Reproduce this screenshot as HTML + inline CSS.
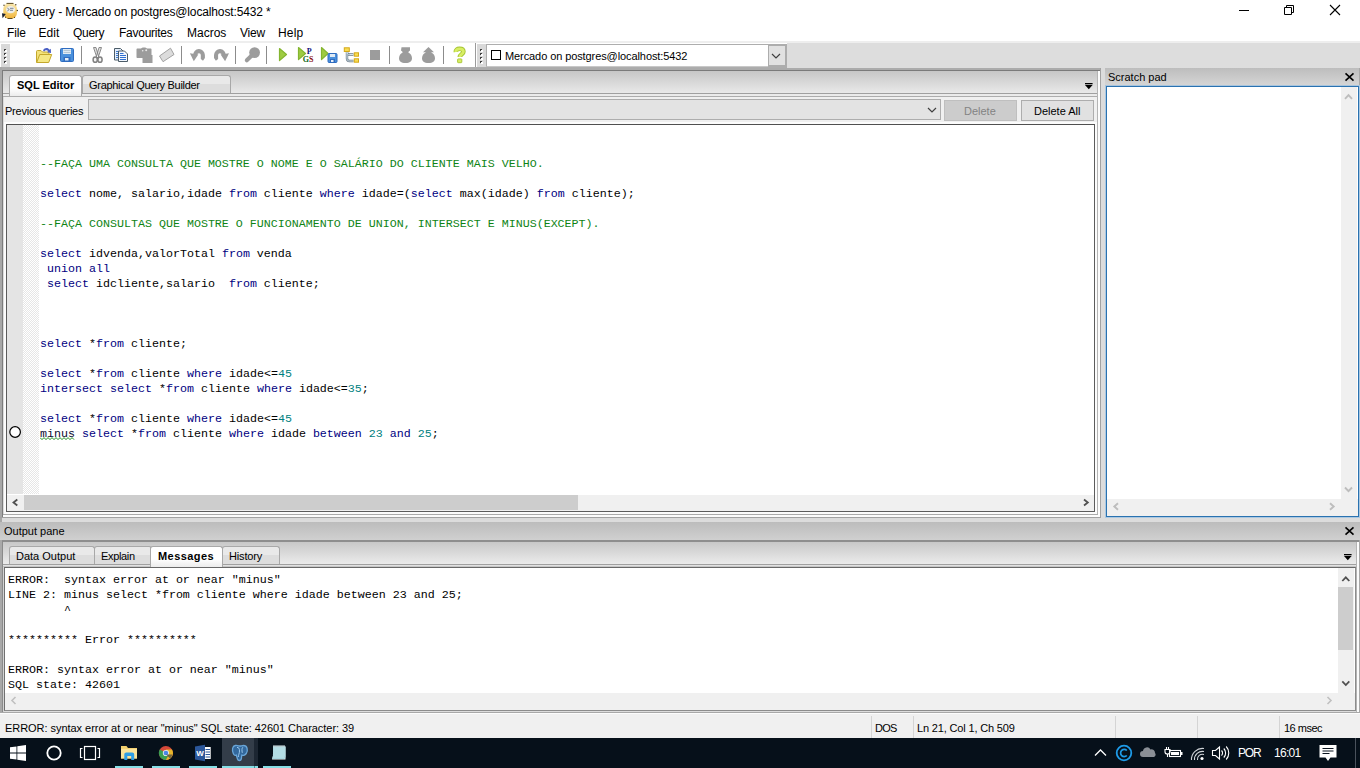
<!DOCTYPE html>
<html lang="pt">
<head>
<meta charset="utf-8">
<title>Query - Mercado on postgres@localhost:5432 *</title>
<style>
*{box-sizing:border-box;margin:0;padding:0}
html,body{width:1360px;height:768px;overflow:hidden;background:#fff}
body{position:relative;font-family:"Liberation Sans",sans-serif;font-size:11px;color:#000}
.a{position:absolute}
.t{position:absolute;white-space:pre;line-height:14px;height:14px}
.ui{font-size:11px}
.mono{font-family:"Liberation Mono",monospace;font-size:11.6667px;line-height:15px;white-space:pre}
.k{color:#00007f}
.c{color:#0f8414}
.n{color:#007f7f}
.ln{position:absolute;left:40px;height:15px}
.sq{color:#0c0c30}
.sep{position:absolute;top:46px;width:1px;height:18px;background:#8c8c8c}
</style>
</head>
<body>

<!-- ===== title bar ===== -->
<div class="a" id="titlebar" style="left:0;top:0;width:1360px;height:23px;background:#fff"></div>
<div class="t" id="title" style="left:23px;top:5px;font-size:12px;letter-spacing:-0.14px">Query - Mercado on postgres@localhost:5432 *</div>

<!-- ===== menu bar ===== -->
<div class="a" id="menubar" style="left:0;top:23px;width:1360px;height:20px;background:#fff"></div>
<div class="t m" style="left:7px;top:26px;font-size:12px;letter-spacing:-0.15px">File</div>
<div class="t m" style="left:38.600px;top:26px;font-size:12px">Edit</div>
<div class="t m" style="left:73px;top:26px;font-size:12px;letter-spacing:-0.3px">Query</div>
<div class="t m" style="left:119px;top:26px;font-size:12px;letter-spacing:-0.25px">Favourites</div>
<div class="t m" style="left:187px;top:26px;font-size:12px">Macros</div>
<div class="t m" style="left:240px;top:26px;font-size:12px;letter-spacing:-0.2px">View</div>
<div class="t m" style="left:278px;top:26px;font-size:12px;letter-spacing:0.2px">Help</div>

<!-- ===== toolbar ===== -->
<div class="a" style="left:0;top:41px;width:1360px;height:2px;background:#eeeeee"></div>
<div class="a" id="tbbg" style="left:0;top:43px;width:1360px;height:25px;background:#dddddd"></div>
<div class="a" id="tb1" style="left:0;top:43px;width:475px;height:24px;background:#fff"></div>
<div class="a" id="tb2" style="left:476px;top:43px;width:311px;height:24px;background:#fff"></div>


<!-- title icon -->
<svg class="a" style="left:0;top:0" width="22" height="22" viewBox="0 0 22 22">
<defs><linearGradient id="tig" x1="0" y1="0" x2="0" y2="1"><stop offset="0" stop-color="#f7e6b0"/><stop offset=".55" stop-color="#f6d070"/><stop offset="1" stop-color="#f0b23a"/></linearGradient></defs>
<rect x="3.300" y="3.300" width="13.700" height="15.300" rx="5.500" fill="url(#tig)"/>
<path d="M6.500 3.400h7M7.500 18.500h5" stroke="#5c4a20" stroke-width="1"/>
<g fill="#4a3a18"><circle cx="4" cy="5.300" r=".7"/><circle cx="15.800" cy="4.800" r=".7"/><circle cx="17.300" cy="10.500" r=".7"/><circle cx="5.600" cy="17.200" r=".6"/><circle cx="14.500" cy="17.300" r=".6"/></g>
<ellipse cx="10.600" cy="9.600" rx="4.600" ry="3.600" fill="#eeeee8"/>
<path d="M7.300 8l2 1.500-2 1.500M10 8.300h3.500M10 10.300h3" stroke="#707888" stroke-width=".9" fill="none"/>
<path d="M2 13.200l3.800.8-3.300 4.200z" fill="#1a2030"/>
</svg>
<!-- window controls -->
<svg class="a" style="left:1238px;top:4px" width="12" height="12" viewBox="0 0 12 12"><path d="M1 6.500h10" stroke="#000" stroke-width="1"/></svg>
<svg class="a" style="left:1283px;top:4px" width="12" height="12" viewBox="0 0 12 12"><path d="M1.5 3.5h7v7h-7zM3.5 3.5v-2h7v7h-2" stroke="#000" stroke-width="1" fill="none"/></svg>
<svg class="a" style="left:1329px;top:4px" width="12" height="12" viewBox="0 0 12 12"><path d="M1 1l10 10M11 1L1 11" stroke="#000" stroke-width="1.1"/></svg>

<!-- toolbar grippers -->
<div class="a" style="left:1px;top:44px;width:9px;height:23px;background:#d9d9d9"></div>
<svg class="a" style="left:3px;top:48px" width="4" height="17" viewBox="0 0 4 17"><g fill="#404040"><rect x="1" y="1" width="2" height="2"/><rect x="1" y="5" width="2" height="2"/><rect x="1" y="9" width="2" height="2"/><rect x="1" y="13" width="2" height="2"/></g><g fill="#fff"><rect x="2" y="2" width="2" height="2"/><rect x="2" y="6" width="2" height="2"/><rect x="2" y="10" width="2" height="2"/><rect x="2" y="14" width="2" height="2"/></g></svg>
<div class="a" style="left:475px;top:43px;width:1px;height:24px;background:#9a9a9a"></div>
<div class="a" style="left:477px;top:44px;width:9px;height:23px;background:#d9d9d9"></div>
<svg class="a" style="left:479px;top:48px" width="4" height="17" viewBox="0 0 4 17"><g fill="#404040"><rect x="1" y="1" width="2" height="2"/><rect x="1" y="5" width="2" height="2"/><rect x="1" y="9" width="2" height="2"/><rect x="1" y="13" width="2" height="2"/></g><g fill="#fff"><rect x="2" y="2" width="2" height="2"/><rect x="2" y="6" width="2" height="2"/><rect x="2" y="10" width="2" height="2"/><rect x="2" y="14" width="2" height="2"/></g></svg>

<!-- separators -->
<div class="sep" style="left:81px"></div>
<div class="sep" style="left:181px"></div>
<div class="sep" style="left:235px"></div>
<div class="sep" style="left:266px"></div>
<div class="sep" style="left:389px"></div>
<div class="sep" style="left:443px"></div>

<!-- toolbar icons (absolute coords) -->
<svg class="a" id="tbicons" style="left:0;top:43px" width="480" height="24" viewBox="0 43 480 24">
<!-- open -->
<path d="M36.500 62.500v-11c0-.6.400-1 1-1h3.500l1.500 1.500h5.500c.6 0 1 .4 1 1v2" fill="#f3e27a" stroke="#c4a82c" stroke-width="1"/>
<path d="M36.700 62.500l3-8h12l-3 8z" fill="#f5e884" stroke="#c4a82c" stroke-width="1" stroke-linejoin="round"/>
<path d="M43 50.500c1.500-3 5-3.200 6.500-.8l1.300-1 .2 4.300-4-.8 1.200-1c-1-1.500-3-1.300-4 .3z" fill="#4a5fc4"/>
<!-- save -->
<rect x="60.500" y="48.500" width="13" height="13" rx="1" fill="#4a90dc" stroke="#2f6cc0" stroke-width="1"/>
<rect x="63" y="49" width="8" height="5" fill="#dfeaf5"/><path d="M63.500 50.500h7M63.500 52.500h7" stroke="#a8bccb" stroke-width=".8"/>
<rect x="63.500" y="57" width="7" height="4.500" fill="#2f6cc0"/><rect x="65" y="58" width="3.500" height="2.500" fill="#e6eef7"/>
<!-- cut -->
<path d="M93.500 47.500h2.500l2.600 9-1.400 2z M101.500 47.500h-2.500l-2.600 9 1.400 2z" fill="#e0e0e0" stroke="#808080" stroke-width=".9" stroke-linejoin="round"/>
<ellipse cx="95.200" cy="59.700" rx="2.100" ry="2.600" fill="#f4f4f4" stroke="#808080" stroke-width="1.500"/>
<ellipse cx="100" cy="59.700" rx="2.100" ry="2.600" fill="#f4f4f4" stroke="#808080" stroke-width="1.500"/>
<!-- copy -->
<path d="M114.500 48.500h6l2.500 2.500v9h-8.500z" fill="#e4eefb" stroke="#4c5c68" stroke-width="1"/>
<path d="M116 51.500h2.500M116 53.500h2.500M116 55.500h2.500M116 57.500h2.500" stroke="#3c78cc" stroke-width="1"/>
<path d="M118.500 51h6l3 3v7.500h-9z" fill="#f2f7fe" stroke="#4c5c68" stroke-width="1"/>
<path d="M120 53.500h3.500M120 55.500h6M120 57.500h6M120 59.500h6" stroke="#2f6fd0" stroke-width="1.100"/>
<!-- paste (disabled) -->
<path d="M137.500 48.500h3.500c.5-1.500 5.500-1.500 6 0h3.500c.6 0 1 .4 1 1v5.500h1v8h-10v-5h-5c-.6 0-1-.4-1-1v-7.500c0-.6.400-1 1-1z" fill="#9c9c9c"/>
<circle cx="142.700" cy="50.700" r=".8" fill="#e8e8e8"/><circle cx="146.200" cy="50.300" r="1" fill="#e8e8e8"/>
<!-- clear -->
<path d="M159.500 56l11-7.800 3.500 6.300-11 7.200z" fill="#dcdcdc" stroke="#a2a2a2" stroke-width="1" stroke-linejoin="round"/>
<!-- undo -->
<g id="undo"><path d="M193.100 55.500A5.900 6.200 0 0 1 204.900 55v3l-1.900 2.800-2.200-1.800v-4a1.800 1.800 0 0 0-3.600 0z" fill="#9c9c9c"/><path d="M189.900 53.200l8.400 1.400-4.500 6.600z" fill="#9c9c9c"/></g>
<!-- redo -->
<g transform="translate(418.900,0) scale(-1,1)"><path d="M193.100 55.500A5.900 6.200 0 0 1 204.900 55v3l-1.900 2.800-2.200-1.800v-4a1.800 1.800 0 0 0-3.600 0z" fill="#9c9c9c"/><path d="M189.900 53.200l8.400 1.400-4.500 6.600z" fill="#9c9c9c"/></g>
<!-- find -->
<circle cx="254.600" cy="52.600" r="5.400" fill="#9c9c9c"/><path d="M251.500 55.700l-4.700 4.600" stroke="#9c9c9c" stroke-width="4" stroke-linecap="round"/>
<!-- execute -->
<path d="M279.500 48.500l7 6-7 6z" fill="#9ecb42" stroke="#84b530" stroke-width="1.200" stroke-linejoin="round"/>
<!-- execute pgScript -->
<path d="M298.500 47.500l7 6-7 6z" fill="#9ecb42" stroke="#84b530" stroke-width="1.200" stroke-linejoin="round"/>
<text x="306.800" y="53.500" font-family="Liberation Serif,serif" font-weight="bold" font-size="8" fill="#10107a">P</text>
<text x="302.800" y="61.700" font-family="Liberation Serif,serif" font-weight="bold" font-size="8" fill="#0f6a20">G</text>
<text x="309" y="61.700" font-family="Liberation Serif,serif" font-weight="bold" font-size="8" fill="#8c1414">S</text>
<!-- execute to file -->
<path d="M321.500 47.500l6.500 6-6.500 6z" fill="#9ecb42" stroke="#84b530" stroke-width="1.200" stroke-linejoin="round"/>
<rect x="328" y="53.500" width="9" height="9" rx="1" fill="#4a90dc" stroke="#2f6cc0" stroke-width="1"/>
<rect x="330" y="54" width="5" height="3" fill="#dfeaf5"/><rect x="330" y="59" width="5" height="3.500" fill="#2f6cc0"/><rect x="331" y="60" width="2.500" height="2" fill="#e6eef7"/>
<!-- explain -->
<path d="M347 51.500v7c0 2 1 2.500 2.500 2.500h4M347 52c0 2 1 2.500 2.500 2.500h4" stroke="#6c7c88" stroke-width="2.400" fill="none"/>
<path d="M347 51.500v7c0 2 1 2.500 2.500 2.500h4M347 52c0 2 1 2.500 2.500 2.500h4" stroke="#d4e4ee" stroke-width="1" fill="none"/>
<rect x="344.300" y="47.800" width="5" height="3.700" fill="#f8dc50" stroke="#d4a818" stroke-width="1"/>
<rect x="354.300" y="52.800" width="4.200" height="3.400" fill="#f8dc50" stroke="#d4a818" stroke-width="1"/>
<rect x="354.300" y="58.800" width="4.200" height="3.400" fill="#f8dc50" stroke="#d4a818" stroke-width="1"/>
<!-- stop -->
<rect x="370" y="50" width="10" height="10" fill="#9c9c9c"/>
<!-- commit -->
<path d="M401.500 47.300h8.500v3.200l-1.500 1.200v1c2 .8 3.500 3 3.500 5.500 0 3-2 4.800-6.500 4.800s-6.500-1.800-6.500-4.800c0-2.500 1.500-4.700 3.500-5.500v-1l-1.500-1.200z" fill="#9c9c9c"/>
<!-- rollback -->
<path d="M428.500 47l5.500 5.200h-2.500v.5c2 .8 3.500 3 3.500 5.500 0 3-2 4.800-6.500 4.800s-6.500-1.800-6.500-4.800c0-2.500 1.500-4.700 3.500-5.500v-.5h-2.500z" fill="#9c9c9c"/>
<!-- help -->
<path d="M455.800 52c-.2-2 1.400-3.200 3.700-3.200s3.900 1.100 3.900 3c0 2.400-3.600 2.500-3.600 5.300" fill="none" stroke="#a6c432" stroke-width="4.600" stroke-linejoin="round"/>
<path d="M455.800 52c-.2-2 1.400-3.200 3.700-3.200s3.900 1.100 3.900 3c0 2.400-3.600 2.500-3.600 5.300" fill="none" stroke="#d8ee64" stroke-width="2.800" stroke-linejoin="round"/>
<rect x="457.600" y="58.900" width="4.200" height="3.800" rx=".6" fill="#d8ee64" stroke="#a6c432" stroke-width=".9"/>
</svg>
<!-- connection combo -->
<div class="a" id="conncombo" style="left:486px;top:44px;width:301px;height:23px;background:#fff;border:1px solid #adadad;border-bottom-color:#c8c8c8"></div>
<div class="a" style="left:491px;top:50px;width:10px;height:10px;border:1.200px solid #000;background:#fff"></div>
<div class="t ui" style="left:505px;top:49px;letter-spacing:-0.09px">Mercado on postgres@localhost:5432</div>
<div class="a" style="left:768px;top:44px;width:19px;height:23px;background:#e1e1e1;border:2px solid #adadad;border-left-width:1px"></div>
<svg class="a" style="left:771px;top:53px" width="10" height="6" viewBox="0 0 10 6"><path d="M1 1l4 4 4-4" stroke="#404040" stroke-width="1.200" fill="none"/></svg>

<!-- ===== main frame background ===== -->
<div class="a" id="mainbg" style="left:0;top:68px;width:1360px;height:649px;background:#dcdcdc"></div>


<!-- shadow under toolbar -->
<div class="a" style="left:0;top:67px;width:787px;height:1px;background:#adadad"></div>
<div class="a" style="left:0;top:68px;width:1100px;height:2px;background:#ababab"></div>
<div class="a" style="left:2px;top:70px;width:1098px;height:1px;background:#7a7a7a"></div>
<!-- left frame edge -->
<div class="a" style="left:0;top:67px;width:2px;height:647px;background:#a8a8a8"></div>
<div class="a" style="left:2px;top:70px;width:1px;height:447px;background:#7c7c7c"></div>

<!-- ===== SQL notebook (left/top panel) ===== -->
<div class="a" id="nbtabbar" style="left:3px;top:71px;width:1095px;height:22px;background:linear-gradient(#c6c6c6,#e9e9e9)"></div>
<div class="a" style="left:3px;top:93px;width:1095px;height:1px;background:#a0a0a0"></div>
<div class="a" style="left:3px;top:94px;width:1095px;height:2px;background:#ebebeb"></div>
<div class="a" style="left:3px;top:96px;width:1095px;height:1px;background:#adadad"></div>
<div class="a" id="nbbody" style="left:3px;top:97px;width:1094px;height:417px;background:#f0f0f0"></div>
<!-- right edge of notebook -->
<div class="a" style="left:1097px;top:71px;width:1px;height:444px;background:#b4b4b4"></div>
<div class="a" style="left:1098px;top:71px;width:2px;height:446px;background:#fcfcfc"></div>
<div class="a" style="left:1100px;top:68px;width:1px;height:450px;background:#a2a2a2"></div>
<!-- bottom edge of notebook -->
<div class="a" style="left:3px;top:512px;width:1094px;height:2px;background:#f6f6f6"></div>
<div class="a" style="left:3px;top:514px;width:1095px;height:1px;background:#ababab"></div>
<div class="a" style="left:3px;top:515px;width:1097px;height:2px;background:#fcfcfc"></div>
<div class="a" style="left:0px;top:517px;width:1101px;height:1px;background:#a2a2a2"></div>

<div class="a" style="left:3px;top:97px;width:1px;height:417px;background:#dcdcdc"></div>
<div class="a" style="left:4px;top:122px;width:1093px;height:392px;background:#fcfcfc"></div>
<!-- tabs -->
<div class="a" id="tab1" style="left:9px;top:75px;width:73px;height:21px;background:linear-gradient(#fff,#fff 60%,#ececec);border:1px solid #a8a8a8;border-bottom:none;border-radius:3px 3px 0 0"></div>
<div class="a" id="tab2" style="left:82px;top:75px;width:149px;height:18px;background:linear-gradient(#e9e9e9,#e9e9e9 45%,#dddddd 46%,#dddddd);border:1px solid #a8a8a8;border-bottom:none;border-radius:3px 3px 0 0"></div>
<div class="t ui" style="left:17px;top:78px;font-weight:bold">SQL Editor</div>
<div class="t ui" style="left:89px;top:78px;letter-spacing:-0.29px">Graphical Query Builder</div>
<!-- tab list dropdown arrow -->
<svg class="a" style="left:1084px;top:83px" width="10" height="8" viewBox="0 0 10 8"><rect x="1" y="0" width="7.600" height="1.300" fill="#000"/><path d="M1 2h7.600l-3.800 4.200z" fill="#000"/></svg>

<!-- previous queries row -->
<div class="t ui" style="left:5px;top:104px;letter-spacing:-0.23px">Previous queries</div>
<div class="a" id="pqcombo" style="left:88px;top:99px;width:853px;height:21px;background:#e3e3e3;border:1px solid #adadad"></div>
<svg class="a" style="left:927px;top:107px" width="10" height="6" viewBox="0 0 10 6"><path d="M1 1l4 4 4-4" stroke="#404040" stroke-width="1.2" fill="none"/></svg>
<div class="a" id="btnDel" style="left:944px;top:100px;width:73px;height:21px;background:#cccccc;border:1px solid #bfbfbf"></div>
<div class="t ui" style="left:964px;top:104px;color:#838383">Delete</div>
<div class="a" id="btnDelAll" style="left:1021px;top:100px;width:73px;height:21px;background:#e1e1e1;border:1px solid #adadad"></div>
<div class="t ui" style="left:1034px;top:104px">Delete All</div>

<!-- editor -->
<div class="a" id="editor" style="left:6px;top:124px;width:1089px;height:388px;background:#fff;border:1px solid #5c5c5c;border-top:1px solid #505050"></div>
<div class="a" id="margin1" style="left:7px;top:125px;width:16px;height:369px;background:#e4e4e4"></div>
<div class="a" id="margin2" style="left:23px;top:125px;width:16px;height:369px;background:repeating-conic-gradient(#e6e6e6 0% 25%,#fff 0% 50%) 0 0/2px 2px"></div>
<!-- editor h-scrollbar -->
<div class="a" id="ehs" style="left:7px;top:495px;width:1087px;height:16px;background:#f0f0f0"></div>
<div class="a" id="ehthumb" style="left:24px;top:495px;width:554px;height:15px;background:#cdcdcd"></div>
<svg class="a" style="left:11px;top:498px" width="8" height="9" viewBox="0 0 8 9"><path d="M6.300 1.500L2.500 4.500 6.300 7.500" stroke="#505050" stroke-width="1.8" fill="none"/></svg>
<svg class="a" style="left:1082px;top:498px" width="8" height="9" viewBox="0 0 8 9"><path d="M2 1.500l3.800 3L2 7.500" stroke="#505050" stroke-width="1.8" fill="none"/></svg>


<!-- code lines -->
<div class="ln mono" style="top:157px"><span class="c">--FAÇA UMA CONSULTA QUE MOSTRE O NOME E O SALÁRIO DO CLIENTE MAIS VELHO.</span></div>
<div class="ln mono" style="top:187px"><span class="k">select</span> nome, salario,idade <span class="k">from</span> cliente <span class="k">where</span> idade=(<span class="k">select</span> max(idade) <span class="k">from</span> cliente);</div>
<div class="ln mono" style="top:217px"><span class="c">--FAÇA CONSULTAS QUE MOSTRE O FUNCIONAMENTO DE UNION, INTERSECT E MINUS(EXCEPT).</span></div>
<div class="ln mono" style="top:247px"><span class="k">select</span> idvenda,valorTotal <span class="k">from</span> venda</div>
<div class="ln mono" style="top:262px"> <span class="k">union</span> <span class="k">all</span></div>
<div class="ln mono" style="top:277px"> <span class="k">select</span> idcliente,salario  <span class="k">from</span> cliente;</div>
<div class="ln mono" style="top:337px"><span class="k">select</span> *<span class="k">from</span> cliente;</div>
<div class="ln mono" style="top:367px"><span class="k">select</span> *<span class="k">from</span> cliente <span class="k">where</span> idade&lt;=<span class="n">45</span></div>
<div class="ln mono" style="top:382px"><span class="k">intersect</span> <span class="k">select</span> *<span class="k">from</span> cliente <span class="k">where</span> idade&lt;=<span class="n">35</span>;</div>
<div class="ln mono" style="top:412px"><span class="k">select</span> *<span class="k">from</span> cliente <span class="k">where</span> idade&lt;=<span class="n">45</span></div>
<div class="ln mono" style="top:427px"><span class="sq">minus</span> <span class="k">select</span> *<span class="k">from</span> cliente <span class="k">where</span> idade <span class="k">between</span> <span class="n">23</span> <span class="k">and</span> <span class="n">25</span>;</div>
<svg class="a" style="left:8px;top:425px" width="14" height="14" viewBox="0 0 14 14"><circle cx="7.100" cy="7" r="5.300" fill="#fff" stroke="#000" stroke-width="1.200"/></svg>
<svg class="a" style="left:40px;top:437px" width="36" height="4" viewBox="0 0 36 4"><polyline points="0.0,0.6 2.0,2.6 4.0,0.6 6.0,2.6 8.0,0.6 10.0,2.6 12.0,0.6 14.0,2.6 16.0,0.6 18.0,2.6 20.0,0.6 22.0,2.6 24.0,0.6 26.0,2.6 28.0,0.6 30.0,2.6 32.0,0.6 34.0,2.6" fill="none" stroke="#008000" stroke-width="0.9"/></svg>

<!-- ===== scratch pad ===== -->
<div class="a" id="spcap" style="left:1105px;top:68px;width:254px;height:18px;background:linear-gradient(#bdbdbd,#d6d6d6)"></div>
<div class="t ui" style="left:1108px;top:70px">Scratch pad</div>
<svg class="a" style="left:1344px;top:72px" width="11" height="10" viewBox="0 0 11 10"><path d="M1.500 1.300l8 7.400M9.500 1.300l-8 7.400" stroke="#000" stroke-width="1.600"/></svg>
<div class="a" id="spbox" style="left:1106px;top:86px;width:253px;height:431px;background:#fff;border:1px solid #2a72b0;box-shadow:0 0 0 1px rgba(110,175,230,.45)"></div>
<div class="a" style="left:1341px;top:87px;width:16px;height:412px;background:#f0f0f0"></div>
<div class="a" style="left:1359px;top:68px;width:1px;height:17px;background:#a8a8a8"></div>
<div class="a" style="left:1107px;top:499px;width:251px;height:17px;background:#f0f0f0"></div>
<svg class="a" style="left:1344px;top:93px" width="9" height="7" viewBox="0 0 9 7"><path d="M1 5.800L4.500 2.200 8 5.800" stroke="#bdbdbd" stroke-width="1.900" fill="none"/></svg>
<svg class="a" style="left:1344px;top:486px" width="9" height="7" viewBox="0 0 9 7"><path d="M1 1.500L4.500 5.200 8 1.500" stroke="#bdbdbd" stroke-width="1.900" fill="none"/></svg>
<svg class="a" style="left:1112px;top:502px" width="8" height="9" viewBox="0 0 8 9"><path d="M6 1.200L2.300 4.500 6 7.800" stroke="#bdbdbd" stroke-width="1.900" fill="none"/></svg>
<svg class="a" style="left:1328px;top:502px" width="8" height="9" viewBox="0 0 8 9"><path d="M2 1.200L5.700 4.500 2 7.800" stroke="#bdbdbd" stroke-width="1.900" fill="none"/></svg>

<!-- ===== output pane ===== -->
<div class="a" id="opcap" style="left:0;top:522px;width:1360px;height:18px;background:linear-gradient(#bcbcbc,#d0d0d0)"></div>
<div class="t ui" style="left:4px;top:524px">Output pane</div>
<svg class="a" style="left:1344px;top:526px" width="11" height="10" viewBox="0 0 11 10"><path d="M1.500 1.300l8 7.400M9.500 1.300l-8 7.400" stroke="#000" stroke-width="1.600"/></svg>
<div class="a" style="left:0;top:540px;width:2px;height:174px;background:#a8a8a8"></div>
<div class="a" style="left:2px;top:540px;width:1358px;height:2px;background:#8e8e8e"></div>
<div class="a" style="left:2px;top:541px;width:1px;height:171px;background:#8a8a8a"></div>
<div class="a" id="optabbar" style="left:3px;top:542px;width:1353px;height:22px;background:linear-gradient(#c8c8c8,#ebebeb)"></div>
<div class="a" style="left:3px;top:564px;width:1353px;height:1px;background:#a0a0a0"></div>
<div class="a" style="left:3px;top:565px;width:1353px;height:1px;background:#e2e2e2"></div>
<div class="a" style="left:3px;top:566px;width:1353px;height:1px;background:#c6c6c6"></div>
<div class="a" style="left:3px;top:567px;width:1px;height:145px;background:#d4d4d4"></div>
<div class="a" style="left:1356px;top:542px;width:1px;height:170px;background:#b4b4b4"></div>
<div class="a" style="left:1357px;top:542px;width:2px;height:171px;background:#fcfcfc"></div>
<div class="a" style="left:1359px;top:540px;width:1px;height:174px;background:#a8a8a8"></div>
<!-- tabs -->
<div class="a" style="left:9px;top:546px;width:86px;height:18px;background:linear-gradient(#e9e9e9,#e9e9e9 45%,#dddddd 46%,#dddddd);border:1px solid #a8a8a8;border-bottom:none;border-radius:3px 3px 0 0"></div>
<div class="a" style="left:94px;top:546px;width:58px;height:18px;background:linear-gradient(#e9e9e9,#e9e9e9 45%,#dddddd 46%,#dddddd);border:1px solid #a8a8a8;border-bottom:none;border-radius:3px 3px 0 0"></div>
<div class="a" style="left:222px;top:546px;width:58px;height:18px;background:linear-gradient(#e9e9e9,#e9e9e9 45%,#dddddd 46%,#dddddd);border:1px solid #a8a8a8;border-bottom:none;border-radius:3px 3px 0 0"></div>
<div class="a" style="left:150px;top:546px;width:73px;height:21px;background:linear-gradient(#fff,#fff 60%,#ececec);border:1px solid #a8a8a8;border-bottom:none;border-radius:3px 3px 0 0"></div>
<div class="t ui" style="left:16px;top:549px">Data Output</div>
<div class="t ui" style="left:101px;top:549px;letter-spacing:-0.33px">Explain</div>
<div class="t ui" style="left:158px;top:549px;font-weight:bold;letter-spacing:0.43px">Messages</div>
<div class="t ui" style="left:229px;top:549px;letter-spacing:-0.16px">History</div>
<svg class="a" style="left:1343px;top:554px" width="10" height="8" viewBox="0 0 10 8"><rect x="1" y="0" width="7.600" height="1.300" fill="#000"/><path d="M1 2h7.600l-3.800 4.200z" fill="#000"/></svg>
<!-- messages box -->
<div class="a" id="msgbox" style="left:4px;top:567px;width:1352px;height:144px;background:#fff;border:1px solid #8c8c8c;border-top-color:#686868;border-left-color:#707070"></div>
<div class="a" style="left:1338px;top:568px;width:16px;height:125px;background:#f0f0f0"></div>
<div class="a" style="left:1338px;top:587px;width:15px;height:63px;background:#cdcdcd"></div>
<div class="a" style="left:5px;top:693px;width:1350px;height:17px;background:#f0f0f0"></div>
<svg class="a" style="left:1341px;top:575px" width="10" height="7" viewBox="0 0 10 7"><path d="M1.300 6L4.800 2.300 8.300 6" stroke="#505050" stroke-width="1.800" fill="none"/></svg>
<svg class="a" style="left:1341px;top:680px" width="10" height="7" viewBox="0 0 10 7"><path d="M1.300 1.300L4.800 5 8.300 1.300" stroke="#505050" stroke-width="1.800" fill="none"/></svg>
<svg class="a" style="left:10px;top:696px" width="7" height="9" viewBox="0 0 7 9"><path d="M5.500 1L2 4.500 5.500 8" stroke="#c0c0c0" stroke-width="1.600" fill="none"/></svg>
<svg class="a" style="left:1326px;top:696px" width="7" height="9" viewBox="0 0 7 9"><path d="M1.500 1L5 4.500 1.500 8" stroke="#c0c0c0" stroke-width="1.600" fill="none"/></svg>
<div class="a" style="left:0;top:712px;width:1360px;height:1px;background:#a8a8a8"></div>
<div class="a" style="left:0;top:713px;width:1360px;height:1px;background:#fcfcfc"></div>
<div class="a mono" style="left:8px;top:573px;height:15px">ERROR:  syntax error at or near &quot;minus&quot;</div>
<div class="a mono" style="left:8px;top:588px;height:15px">LINE 2: minus select *from cliente where idade between 23 and 25;</div>
<div class="a mono" style="left:8px;top:603px;height:15px">        ^</div>
<div class="a mono" style="left:8px;top:633px;height:15px">********** Error **********</div>
<div class="a mono" style="left:8px;top:663px;height:15px">ERROR: syntax error at or near &quot;minus&quot;</div>
<div class="a mono" style="left:8px;top:678px;height:15px">SQL state: 42601</div>

<!-- ===== status bar ===== -->
<div class="a" id="statusbar" style="left:0;top:714px;width:1360px;height:24px;background:#f0f0f0"></div>


<div class="t ui" style="left:5px;top:721px;letter-spacing:-0.044px">ERROR: syntax error at or near "minus" SQL state: 42601 Character: 39</div>
<div class="t ui" style="left:875px;top:721px;letter-spacing:-0.8px">DOS</div>
<div class="t ui" style="left:917px;top:721px;letter-spacing:-0.16px">Ln 21, Col 1, Ch 509</div>
<div class="t ui" style="left:1284px;top:721px;letter-spacing:-0.5px">16 msec</div>
<div class="a" style="left:871px;top:716px;width:1px;height:22px;background:#d4d4d4"></div>
<div class="a" style="left:913px;top:716px;width:1px;height:22px;background:#d4d4d4"></div>
<div class="a" style="left:1115px;top:716px;width:1px;height:22px;background:#d4d4d4"></div>
<div class="a" style="left:1197px;top:716px;width:1px;height:22px;background:#d4d4d4"></div>
<div class="a" style="left:1279px;top:716px;width:1px;height:22px;background:#d4d4d4"></div>

<!-- ===== taskbar ===== -->
<div class="a" id="taskbar" style="left:0;top:738px;width:1360px;height:30px;background:#06101a"></div>


<!-- start -->
<svg class="a" style="left:10px;top:745px" width="16" height="16" viewBox="0 0 16 16"><path d="M0 2.300l6.500-.9v6.200H0zM7.300 1.300L16 0v7.600H7.300zM0 8.400h6.500v6.200L0 13.700zM7.300 8.400H16V16l-8.700-1.300z" fill="#fff"/></svg>
<!-- cortana -->
<svg class="a" style="left:45px;top:744px" width="18" height="18" viewBox="0 0 18 18"><circle cx="9" cy="9" r="6.700" fill="none" stroke="#fff" stroke-width="1.800"/></svg>
<!-- task view -->
<svg class="a" style="left:79px;top:745px" width="22" height="16" viewBox="0 0 22 16"><rect x="5.500" y="1.500" width="11" height="13" fill="none" stroke="#fff" stroke-width="1.200"/><path d="M3.500 3.500h-2v9h2M18.500 3.500h2v9h-2" stroke="#fff" stroke-width="1.200" fill="none"/></svg>
<!-- explorer -->
<svg class="a" style="left:119px;top:744px" width="20" height="18" viewBox="0 0 20 18">
<path d="M2 2h5.500l1.500 2h9v10.500H2z" fill="#f2cf6c"/><path d="M2 4.800h16v9.700H2z" fill="#fbe49a"/>
<path d="M5.300 16v-5.500c0-1.200.8-2 2-2h5.900c1.200 0 2 .8 2 2V16h-3v-4h-3.900v4z" fill="#2f9fe6"/>
</svg>
<!-- chrome -->
<svg class="a" style="left:158px;top:745px" width="16" height="16" viewBox="0 0 16 16">
<circle cx="7.900" cy="8" r="7" fill="#d4483a"/>
<path d="M7.900 8L1.800 4.500A7 7 0 0 0 7.900 15L11 9.500z" fill="#3a9e52"/>
<path d="M7.900 8l3.100 1.500L7.900 15A7 7 0 0 0 14 4.500H7.900z" fill="#e8b62c"/>
<circle cx="7.900" cy="8" r="3.100" fill="#e8ecf0"/><circle cx="7.900" cy="8" r="2.300" fill="#4a86e8"/>
<path d="M8 9.500h6.300a7 7 0 0 1-2.300 4z" fill="#4a4a42" opacity=".75"/>
</svg>
<!-- word -->
<svg class="a" style="left:194px;top:744px" width="18" height="18" viewBox="0 0 18 18">
<rect x="9" y="3" width="7.700" height="12" fill="#fff"/><path d="M11.500 5.500h4.500M11.500 8h4.500M11.500 10.500h4.500M11.500 13h4.500" stroke="#2b579a" stroke-width="1"/>
<path d="M1 2.500l10-1.700v16.400l-10-1.700z" fill="#2b579a"/>
<text x="2.300" y="12" font-family="Liberation Sans,sans-serif" font-weight="bold" font-size="8" fill="#fff">W</text>
</svg>
<!-- pgadmin active -->
<div class="a" style="left:222px;top:738px;width:32px;height:30px;background:#333d49"></div>
<div class="a" style="left:254px;top:738px;width:4px;height:30px;background:#1c2632"></div>
<svg class="a" style="left:231px;top:744px" width="18" height="18" viewBox="0 0 18 18">
<path d="M4.300 1.500C1.300 2 .8 6 2.300 9.500c.8 1.800 2 2.300 3 1.500l1.200 4c.5 2 3.300 2 3.800 0l.5-4c1 .8 3 .5 4.500-1.500C17.300 6 16.300 1.500 12.500 1.500c-1.500 0-2.500.5-3.500.5S6.300 1.200 4.300 1.500z" fill="#33689c" stroke="#6aa6d8" stroke-width="1.300" stroke-linejoin="round"/>
<path d="M6 3.500c1.500-.5 2.500 1 2.500 3.500S7.300 11 7.300 13M11.800 3.300c-1 1-1 3-.5 5.500" stroke="#9cc8ec" stroke-width="1" fill="none"/>
</svg>
<!-- notepad -->
<svg class="a" style="left:268px;top:744px" width="20" height="18" viewBox="0 0 20 18">
<path d="M5 2.500h12.500v13h-13.500l1-3z" fill="#f4f8f8"/>
<path d="M5 2.500h12.500v10.500l-1 2h-12.500l1-3z" fill="#a6d6e0"/>
<path d="M5.500 5h11.500M5.300 7h11.700M5 9h12M4.800 11h12.200M4.300 13h12" stroke="#c8e8ee" stroke-width=".8"/>
<path d="M6 1v2.500M8 1v2.500M10 1v2.500M12 1v2.500M14 1v2.500M16 1v2.500" stroke="#dceef2" stroke-width="1"/>
</svg>
<!-- underlines -->
<div class="a" style="left:115px;top:766px;width:28px;height:2px;background:#86dfe6"></div>
<div class="a" style="left:152px;top:766px;width:28px;height:2px;background:#86dfe6"></div>
<div class="a" style="left:189px;top:766px;width:28px;height:2px;background:#86dfe6"></div>
<div class="a" style="left:222px;top:766px;width:36px;height:2px;background:#86dfe6"></div>
<div class="a" style="left:254px;top:766px;width:1px;height:2px;background:#4a8a92"></div>
<div class="a" style="left:263px;top:766px;width:28px;height:2px;background:#86dfe6"></div>

<!-- tray -->
<svg class="a" style="left:1094px;top:748px" width="13" height="9" viewBox="0 0 13 9"><path d="M1 7.500L6.500 2 12 7.500" stroke="#fff" stroke-width="1.300" fill="none"/></svg>
<svg class="a" style="left:1115px;top:744px" width="18" height="18" viewBox="0 0 18 18"><circle cx="9" cy="9" r="7.300" fill="none" stroke="#1e9be8" stroke-width="1.800"/><path d="M11.800 6.500A3.600 3.600 0 1 0 11.800 11.500" stroke="#1e9be8" stroke-width="1.700" fill="none"/></svg>
<svg class="a" style="left:1139px;top:746px" width="18" height="12" viewBox="0 0 18 12"><path d="M4 11a3 3 0 0 1 0-6 4 4 0 0 1 7.500-1.500A3.500 3.500 0 0 1 16 7a2.500 2.500 0 0 1-1 4z" fill="#8a8f96"/></svg>
<svg class="a" style="left:1163px;top:746px" width="20" height="14" viewBox="0 0 20 14"><rect x="6.500" y="4.500" width="11" height="6" fill="none" stroke="#fff" stroke-width="1.100"/><rect x="18" y="6" width="1.500" height="3" fill="#fff"/><path d="M3.500 1v2.500M5.500 1v2.500M2 3.500h5v2.500c0 1-1 2-2.500 2S2 7 2 6zM4.500 8v3" stroke="#fff" stroke-width="1.100" fill="none"/><rect x="8" y="6" width="8" height="3" fill="#fff"/></svg>
<svg class="a" style="left:1190px;top:746px" width="16" height="16" viewBox="0 0 16 16"><circle cx="12" cy="12.500" r="1.600" fill="#fff"/><path d="M1.500 14A11 11 0 0 1 14 2.500M4.500 14A8 8 0 0 1 14 5.500M7.500 14A5 5 0 0 1 14 8.500" stroke="#d0d4d8" stroke-width="1.100" fill="none"/></svg>
<svg class="a" style="left:1211px;top:744px" width="20" height="18" viewBox="0 0 20 18"><path d="M1.500 6.500h3l4-3.500v12l-4-3.500h-3z" fill="none" stroke="#fff" stroke-width="1.100"/><path d="M10.500 6.500a3.500 3.500 0 0 1 0 5M12.800 4.500a6.500 6.500 0 0 1 0 9M15.200 2.500a9.500 9.500 0 0 1 0 13" stroke="#fff" stroke-width="1.100" fill="none"/></svg>
<div class="t" style="left:1238px;top:746px;font-size:12px;color:#fff;letter-spacing:-1.2px">POR</div>
<div class="t" style="left:1274px;top:746px;font-size:12px;color:#fff;letter-spacing:-0.7px">16:01</div>
<svg class="a" style="left:1318px;top:744px" width="20" height="18" viewBox="0 0 20 18"><path d="M1.500 1h17v12.500h-6l-2.500 3.500-2.500-3.500h-6z" fill="#fff"/><path d="M4.500 4.500h11M4.500 7h11M4.500 9.500h7" stroke="#0b1520" stroke-width="1.200"/></svg>
<div class="a" style="left:1355px;top:738px;width:1px;height:30px;background:#4a525c"></div>

</body>
</html>
